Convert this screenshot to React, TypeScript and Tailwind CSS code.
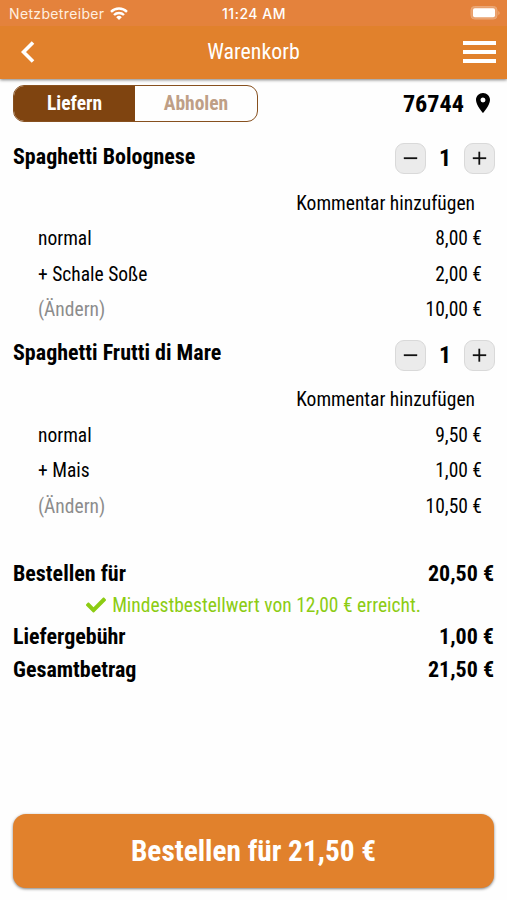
import { FaCheck } from "react-icons/fa";
import { MdLocationOn } from "react-icons/md";

type Line = { label: string; price: string; muted?: boolean };
type Item = { name: string; lines: Line[] };

const items: Item[] = [
  {
    name: "Spaghetti Bolognese",
    lines: [
      { label: "normal", price: "8,00 €" },
      { label: "+ Schale Soße", price: "2,00 €" },
      { label: "(Ändern)", price: "10,00 €", muted: true },
    ],
  },
  {
    name: "Spaghetti Frutti di Mare",
    lines: [
      { label: "normal", price: "9,50 €" },
      { label: "+ Mais", price: "1,00 €" },
      { label: "(Ändern)", price: "10,50 €", muted: true },
    ],
  },
];

function StepButton({ plus }: { plus?: boolean }) {
  return (
    <button className="flex h-[31px] w-[31px] items-center justify-center rounded-[9px] border border-[#d9d9d9] bg-[#ebebeb]">
      <svg viewBox="0 0 31 31" className="h-[31px] w-[31px] shrink-0" stroke="#111" strokeWidth="1.8">
        <path d="M8.800 15.200h13.400" />
        {plus && <path d="M15.300 8.700v13" />}
      </svg>
    </button>
  );
}

function CartItem({ item }: { item: Item }) {
  return (
    <section className="h-[196.6px]">
      <div className="flex h-[55.2px] items-start justify-between pr-3 pl-[13px]">
        <h2 className="pt-[12.4px] text-[22px] leading-7 font-bold">{item.name}</h2>
        <div className="flex items-center pt-[12.5px]">
          <StepButton />
          <span className="w-[38px] text-center text-[24px] leading-[31px] font-bold">1</span>
          <StepButton plus />
        </div>
      </div>
      <div className="h-[35.5px] pr-8 text-right text-[19.5px] leading-[36.5px]">Kommentar hinzufügen</div>
      {item.lines.map((l) => (
        <div key={l.label} className="flex h-[35.5px] justify-between pr-[25px] pl-[38px] text-[19.5px] leading-[36.5px]">
          <span className={l.muted ? "text-[#8c8c8c]" : ""}>{l.label}</span>
          <span>{l.price}</span>
        </div>
      ))}
    </section>
  );
}

function Total({ label, value }: { label: string; value: string }) {
  return (
    <div className="flex h-[33px] items-center justify-between pr-[13px] pl-[13px] text-[22px] font-bold">
      <span>{label}</span>
      <span>{value}</span>
    </div>
  );
}

export default function App() {
  return (
    <div className="flex h-[900px] w-[507px] flex-col overflow-hidden bg-[#fefefe] font-['Roboto_Condensed',Roboto,sans-serif] text-black [font-stretch:75%]">
      <header className="h-[79px] shrink-0 bg-[#e1812c] text-white shadow-[0_1px_3px_rgba(0,0,0,0.5)]">
        <div className="grid h-[26px] grid-cols-3 items-center bg-[#e4823c] pr-[7px] pl-[9px] font-[Inter,sans-serif] text-[14px] tracking-[0.35px] [font-stretch:100%]">
          <div className="flex items-center gap-1.5">
            <span className="text-[#fff0e0]">Netzbetreiber</span>
            <svg viewBox="0 0 18 13" className="h-[13px] w-[18px] shrink-0" fill="none" stroke="white" strokeWidth="2.4">
              <path d="M1 4.8a11.400 11.400 0 0 1 16 0" />
              <path d="M4 8a7.100 7.100 0 0 1 10 0" />
              <path d="M9 13L6.200 10.200a4 4 0 0 1 5.600 0Z" fill="white" stroke="none" />
            </svg>
          </div>
          <span className="pr-px text-center font-medium tracking-[0.5px]">11:24 AM</span>
          <svg viewBox="0 0 30 14" className="h-[14px] w-[30px] justify-self-end">
            <rect x="1" y="0.5" width="26" height="12.5" rx="3.5" fill="#e9a06c" stroke="#eba878" />
            <rect x="3" y="2.3" width="22" height="9" rx="1.8" fill="white" />
            <path d="M28.500 5v4c1.300-.8 1.300-3.200 0-4" fill="#f3bd92" />
          </svg>
        </div>
        <div className="grid h-[53px] grid-cols-[1fr_auto_1fr] items-center pr-[11px] pl-[11px]">
          <svg viewBox="0 0 14 22" className="mb-0.5 ml-2.5 h-[22px] w-[14px]" fill="none" stroke="white" strokeWidth="3.6">
            <path d="M12 1.500L2.500 11L12 20.500" />
          </svg>
          <h1 className="text-center text-[21.9px]">Warenkorb</h1>
          <div className="mb-px flex w-[33px] flex-col gap-[5px] justify-self-end">
            <span className="h-1 bg-white" />
            <span className="h-1 bg-white" />
            <span className="h-1 bg-white" />
          </div>
        </div>
      </header>
      <div className="flex h-[51.5px] shrink-0 items-start justify-between pt-1.5 pr-3 pl-[13px]">
        <div className="flex h-[37px] w-[245px] overflow-hidden rounded-[11px] border border-[#87501f] text-[19.5px] leading-[35px] font-bold">
          <span className="w-[121px] bg-[#7f4410] text-center text-white">Liefern</span>
          <span className="flex-1 text-center text-[#bf9f86]">Abholen</span>
        </div>
        <div className="flex h-[38px] items-center gap-[7px]">
          <span className="text-[24.2px] font-bold">76744</span>
          <MdLocationOn className="mb-0.5 h-6 w-6" />
        </div>
      </div>
      <main className="shrink-0">
        {items.map((i) => (
          <CartItem key={i.name} item={i} />
        ))}
      </main>
      <div className="shrink-0 pt-[33.4px]">
        <Total label="Bestellen für" value="20,50 €" />
        <div className="flex h-[29.5px] items-center justify-center gap-1.5 text-[19.5px] text-[#8ccc13]">
          <FaCheck className="h-5 w-5" />
          <span className="pt-px">Mindestbestellwert von 12,00 € erreicht.</span>
        </div>
        <Total label="Liefergebühr" value="1,00 €" />
        <Total label="Gesamtbetrag" value="21,50 €" />
      </div>
      <button className="mx-[13px] mt-auto mb-3 h-[74px] shrink-0 rounded-[13px] bg-[#e1812c] pt-0.5 text-[29.3px] font-bold text-white shadow-[0_1px_3px_rgba(0,0,0,0.5)]">
        Bestellen für 21,50 €
      </button>
    </div>
  );
}
